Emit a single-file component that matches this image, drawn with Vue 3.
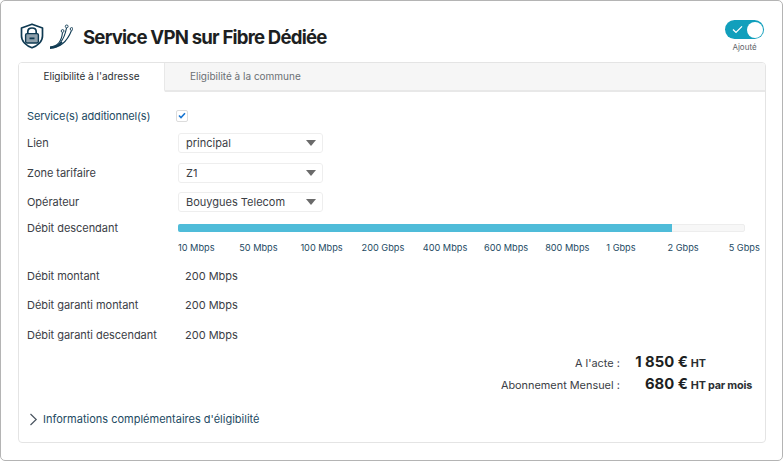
<script setup>
const ticks = ['10 Mbps','50 Mbps','100 Mbps','200 Gbps','400 Mbps','600 Mbps','800 Mbps','1 Gbps','2 Gbps','5 Gbps']
const fixedRows = [
  { label: 'Débit montant', value: '200 Mbps' },
  { label: 'Débit garanti montant', value: '200 Mbps' },
  { label: 'Débit garanti descendant', value: '200 Mbps' },
]
const selects = [
  { label: 'Lien', value: 'principal' },
  { label: 'Zone tarifaire', value: 'Z1' },
  { label: 'Opérateur', value: 'Bouygues Telecom' },
]
</script>

<template>
  <div class="card">
    <header class="head">
      <div class="icons">
        <svg width="24" height="26" viewBox="0 0 24 26" fill="none" stroke="#0f3a52" stroke-width="1.7">
          <path d="M12 1.2 L22.5 5 V13 C22.5 18.5 17.5 22.8 12 24.8 C6.5 22.8 1.5 18.5 1.5 13 V5 Z" stroke-linejoin="round"/>
          <path d="M7.8 11 V8.6 C7.8 3.8 16.2 3.8 16.2 8.6 V11" />
          <rect x="5.6" y="10.6" width="12.8" height="9.4" rx="1.4" fill="#8fa0ab" stroke="#0f3a52" stroke-width="1.4"/>
          <path d="M9.5 15.3 H14.5" stroke="#0f3a52" stroke-width="1.8"/>
        </svg>
        <svg width="24" height="26" viewBox="0 0 24 26" fill="none" stroke="#0f3a52">
          <path d="M1 24 C8 23.5 12.5 19 13.5 9.5" stroke-width="1.1"/>
          <path d="M1 24.4 C8.5 24 15 18 17.5 5" stroke-width="1.1"/>
          <path d="M1 24.8 C10 24.8 18 19 22.5 7.5" stroke-width="1.1"/>
          <path d="M1 25 C6 25 10 23 13 19" stroke-width="1.8"/>
          <circle cx="13.6" cy="8" r="1.4" stroke-width="0.9" fill="#fff"/>
          <circle cx="17.7" cy="3.4" r="1.4" stroke-width="0.9" fill="#fff"/>
          <circle cx="22.6" cy="6" r="1.4" stroke-width="0.9" fill="#fff"/>
        </svg>
      </div>
      <h1 class="title">Service VPN sur Fibre Dédiée</h1>
      <div class="added">
        <div class="switch">
          <svg width="11" height="9" viewBox="0 0 11 9" fill="none" stroke="#fff" stroke-width="1.3">
            <path d="M1 4.6 L4 7.4 L10 1.4"/>
          </svg>
          <span class="knob"></span>
        </div>
        <span class="added-label">Ajouté</span>
      </div>
    </header>

    <section class="panel">
      <nav class="tabs">
        <div class="tab active">Eligibilité à l'adresse</div>
        <div class="tab">Eligibilité à la commune</div>
        <div class="tab-fill"></div>
      </nav>

      <div class="body">
        <div class="row row-check">
          <span class="label blue">Service(s) additionnel(s)</span>
          <span class="check">
            <svg width="8" height="7" viewBox="0 0 8 7" fill="none" stroke="#1976d2" stroke-width="1.6">
              <path d="M1 3.5 L3 5.5 L7 1.2"/>
            </svg>
          </span>
        </div>

        <div v-for="s in selects" :key="s.label" class="row row-select">
          <span class="label">{{ s.label }}</span>
          <div class="select">
            <span>{{ s.value }}</span>
            <i class="arrow"></i>
          </div>
        </div>

        <div class="row row-slider">
          <span class="label">Débit descendant</span>
          <div class="track"><div class="fill" style="width: 87.4%"></div></div>
        </div>
        <div class="ticks">
          <span v-for="t in ticks" :key="t">{{ t }}</span>
        </div>

        <div class="fixed-list">
          <div v-for="r in fixedRows" :key="r.label" class="row row-fixed">
            <span class="label">{{ r.label }}</span>
            <span class="value">{{ r.value }}</span>
          </div>
        </div>

        <div class="prices">
          <span class="p-label">A l'acte :</span>
          <span class="p-amount">1 850 €</span>
          <span class="p-unit">HT</span>
          <span class="p-label">Abonnement Mensuel :</span>
          <span class="p-amount">680 €</span>
          <span class="p-unit">HT par mois</span>
        </div>

        <div class="more">
          <svg width="9" height="13" viewBox="0 0 9 13" fill="none" stroke="#4a5560" stroke-width="1.2">
            <path d="M1.5 1 L7.2 6.5 L1.5 12"/>
          </svg>
          <span>Informations complémentaires d'éligibilité</span>
        </div>
      </div>
    </section>
  </div>
</template>

<style>
html, body { margin: 0; background: #fff; }
</style>

<style scoped>
.card {
  box-sizing: border-box;
  width: 783px;
  height: 461px;
  border: 1px solid #b4b4b4;
  border-right-width: 1.5px;
  border-bottom-width: 1.5px;
  border-radius: 5px;
  padding: 0 16px 0 17px;
  background: #fff;
  font-family: Inter, "Noto Sans", sans-serif;
  color: #3b4046;
  font-size: 11px;
  overflow: hidden;
}
.head {
  display: flex;
  align-items: flex-start;
  height: 61px;
}
.icons {
  display: flex;
  gap: 5px;
  margin: 22px 0 0 2px;
}
.title {
  margin: 24px 0 0 10px;
  font-size: 18.6px;
  line-height: 24px;
  font-weight: 700;
  letter-spacing: -0.8px;
  color: #1d1f22;
}
.added {
  margin-left: auto;
  margin-right: 1.5px;
  margin-top: 19px;
  display: flex;
  flex-direction: column;
  align-items: center;
  gap: 3px;
  width: 40px;
}
.switch {
  box-sizing: border-box;
  width: 39px;
  height: 19px;
  border-radius: 10px;
  background: #119fbc;
  display: flex;
  align-items: center;
  justify-content: space-between;
  padding: 0 1.5px 0 7px;
}
.knob {
  width: 16px;
  height: 16px;
  border-radius: 50%;
  background: #fff;
}
.added-label {
  font-size: 8px;
  line-height: 11px;
  color: #5d6368;
}
.panel {
  box-sizing: border-box;
  height: 381px;
  border: 1px solid #e4e4e4;
  border-radius: 4px;
  overflow: hidden;
}
.tabs {
  display: flex;
  height: 29px;
  font-size: 10px;
  background: #f6f6f6;
}
.tab {
  box-sizing: border-box;
  width: 146px;
  line-height: 27px;
  color: #6b7074;
  border-bottom: 2px solid #e8e8e8;
}
.tab + .tab { width: 146px; padding-left: 25px; white-space: nowrap; }
.tab.active {
  text-align: center;
  background: #fff;
  color: #2b2f33;
  border-bottom-color: #fff;
  border-right: 1px solid #e8e8e8;
}
.tab-fill {
  flex: 1;
  border-bottom: 2px solid #e8e8e8;
}
.body {
  padding: 0 0 0 8px;
}
.row {
  display: flex;
  align-items: center;
}
.label {
  width: 151px;
  flex: none;
  line-height: 16px;
  letter-spacing: -0.04px;
  color: #3b4046;
}
.label.blue { color: #234a63; letter-spacing: -0.16px; }
.row-check {
  height: 30px;
  margin-top: 8.5px;
}
.check {
  box-sizing: border-box;
  width: 12px;
  height: 12px;
  margin-left: -2px;
  border: 1px solid #dcdcdc;
  border-radius: 2px;
  background: #fff;
  display: flex;
  align-items: center;
  justify-content: center;
}
.row-select {
  height: 20px;
  margin-bottom: 9.5px;
}
.row-check + .row-select { margin-top: 2.5px; }
.select {
  box-sizing: border-box;
  width: 145px;
  height: 20px;
  padding: 0 6px 0 7px;
  border: 1px solid #eeeeee;
  border-radius: 3px;
  display: flex;
  align-items: center;
  justify-content: space-between;
  color: #3b4046;
}
.arrow {
  width: 0;
  height: 0;
  border-left: 5px solid transparent;
  border-right: 5px solid transparent;
  border-top: 6px solid #6a6a6a;
}
.row-slider {
  height: 16px;
  margin-top: -1.7px;
}
.track {
  width: 567px;
  height: 8px;
  box-sizing: border-box;
  background: #f7f7f7;
  border: 1px solid #ededed;
  border-radius: 2px;
  position: relative;
}
.fill {
  height: 8px;
  margin: -1px;
  background: #4fbcd9;
  border-radius: 2px 0 0 2px;
}
.ticks {
  display: grid;
  grid-template-columns: repeat(10, 61.2px);
  margin: 6px 0 0 151px;
  font-size: 9.2px;
  line-height: 12px;
  color: #234a63;
  white-space: nowrap;
}
.fixed-list {
  margin-top: 7px;
}
.row-fixed {
  height: 29.5px;
}
.row-fixed .value { margin-left: 7px; color: #3b4046; }
.prices {
  display: grid;
  grid-template-columns: auto 68px auto;
  justify-content: end;
  align-items: baseline;
  row-gap: 2px;
  margin: 3px 13px 0 0;
}
.p-label {
  text-align: right;
  font-size: 10.9px;
  line-height: 16px;
  color: #3b4046;
}
.p-amount {
  text-align: right;
  font-size: 14.8px;
  line-height: 20px;
  font-weight: 700;
  color: #1d1f22;
}
.p-unit {
  padding-left: 3px;
  min-width: 61px;
  line-height: 16px;
  font-size: 10.8px;
  font-weight: 700;
  letter-spacing: -0.2px;
  color: #2b2f33;
}
.more {
  display: flex;
  align-items: center;
  gap: 5px;
  margin: 16px 0 0 2px;
  line-height: 18px;
  color: #234a63;
}
</style>
